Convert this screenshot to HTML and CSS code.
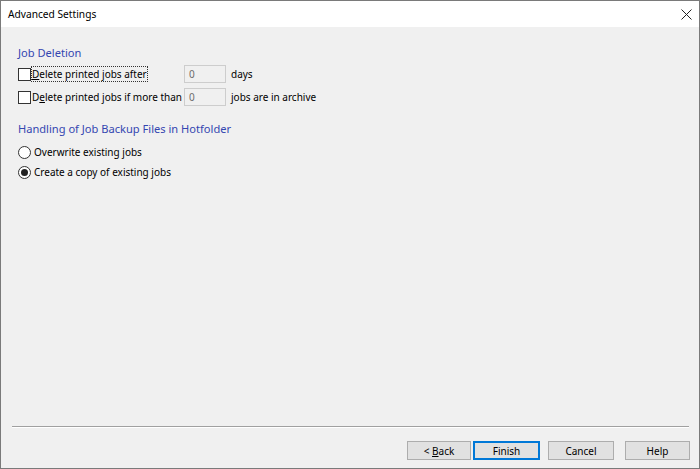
FILE: index.html
```html
<!DOCTYPE html>
<html>
<head>
<meta charset="utf-8">
<link rel="stylesheet" href="styles.css">
</head>
<body>
<div class="window">
  <div class="titlebar">
    <span class="title">Advanced Settings</span>
    <svg class="close" width="11" height="11" viewBox="0 0 11 11"><path d="M0.5 0.5 L10.5 10.5 M10.5 0.5 L0.5 10.5" stroke="#222" stroke-width="1" fill="none"/></svg>
  </div>
  <div class="content">
    <div class="heading h1">Job Deletion</div>
    <div class="row r1">
      <span class="check"></span>
      <span class="labelcol"><span class="label focus"><u>D</u>elete printed jobs after</span></span>
      <span class="field">0</span>
      <span class="unit">days</span>
    </div>
    <div class="row r2">
      <span class="check"></span>
      <span class="labelcol"><span class="label">D<u>e</u>lete printed jobs if more than</span></span>
      <span class="field">0</span>
      <span class="unit">jobs are in archive</span>
    </div>
    <div class="heading h2">Handling of Job Backup Files in Hotfolder</div>
    <div class="row r3">
      <span class="radio"></span>
      <span class="label">Overwrite existing jobs</span>
    </div>
    <div class="row r4">
      <span class="radio on"></span>
      <span class="label">Create a copy of existing jobs</span>
    </div>
  </div>
  <div class="separator"></div>
  <div class="buttons">
    <button class="btn b-back">&lt; <u>B</u>ack</button>
    <button class="btn b-finish default">Finish</button>
    <button class="btn b-cancel">Cancel</button>
    <button class="btn b-help">Help</button>
  </div>
</div>
</body>
</html>
```
FILE: styles.css
```css
* { box-sizing: border-box; }
html, body { margin: 0; padding: 0; }
body {
  width: 700px; height: 469px; overflow: hidden;
  font-family: "Noto Sans", "Open Sans", sans-serif;
  font-size: 10px; color: #000;
}
.window {
  width: 700px; height: 469px;
  border: 1px solid #7a7a7a;
  background: #f0f0f0;
  display: flex; flex-direction: column;
}
.titlebar {
  height: 26px; background: #fff;
  display: flex; align-items: center; justify-content: space-between;
  padding: 0 7px 0 7px;
  flex: none;
}
.title { font-size: 10.2px; }
.content {
  flex: 1;
  padding: 18px 0 0 17px;
  display: flex; flex-direction: column;
}
.heading {
  color: #3446b0; font-size: 11.1px; line-height: 16px;
}
.row { display: flex; align-items: center; height: 18px; }
.h1 { margin-bottom: 4px; }
.r1 { margin-bottom: 5px; }
.r2 { margin-bottom: 15px; }
.h2 { margin-bottom: 6px; }
.r3 { margin-bottom: 2px; }
.check {
  width: 13px; height: 13px; border: 1px solid #333; background: #fff;
  margin: 0; flex: none;
}
.radio {
  width: 13px; height: 13px; border: 1px solid #333; background: #fff;
  border-radius: 50%; margin-left: 0; margin-right: 2px; flex: none;
  display: flex; align-items: center; justify-content: center;
}
.radio.on::after {
  content: ""; width: 7px; height: 7px; border-radius: 50%; background: #222;
}
.labelcol { width: 153px; flex: none; display: flex; }
.label { white-space: nowrap; line-height: 16px; padding: 0 1px; }
.focus { outline: 1px dotted #333; outline-offset: -1px; }
.field {
  width: 42px; height: 18px; border: 1px solid #cdcdcd; background: #f0f0f0;
  color: #6d6d6d; padding-left: 4px; line-height: 16px; flex: none;
}
.unit { margin-left: 5px; white-space: nowrap; }
.separator {
  margin: 0 10px 0 11px; height: 2px;
  border-top: 1px solid #a0a0a0; border-bottom: 1px solid #fff;
  flex: none;
}
.buttons {
  height: 40px; flex: none;
  display: flex; justify-content: flex-end; align-items: flex-start;
  padding: 13px 9px 0 0;
}
.btn {
  height: 19px; width: 64px;
  font-family: inherit; font-size: 10px; color: #000;
  background: #e1e1e1; border: 1px solid #adadad;
  padding: 0; margin: 0; line-height: 16px;
}
.btn.default { border: 2px solid #0078d7; line-height: 14px; }
.b-back { margin-right: 2px; }
.b-finish { width: 67px; margin-right: 8px; }
.b-cancel { width: 66px; margin-right: 11px; }
.b-help { width: 65px; }
u { text-decoration: underline; text-underline-offset: 1px; }
```
